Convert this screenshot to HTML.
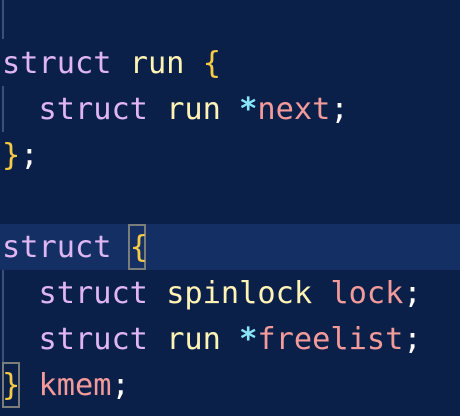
<!DOCTYPE html>
<html><head><style>
html,body{margin:0;padding:0;width:460px;height:416px;overflow:hidden;background:#0b2049;}
.ln{position:absolute;left:2px;height:46px;line-height:46px;font-family:"DejaVu Sans Mono","Liberation Mono",monospace;font-size:30.3px;white-space:pre;color:#fff;}
.k{color:#dfb6f2}.t{color:#fff3b5}.b{color:#f6cb45}.v{color:#f39a9a}.p{color:#88e6f5;font-weight:bold}
.hl{position:absolute;left:0;top:224px;width:460px;height:46px;background:#132f64;}
.g{position:absolute;left:2px;width:2px;background:#3d4f7a;}
.box{position:absolute;border:2px solid #7a7d7a;box-sizing:border-box;}
</style></head><body>
<div class="hl"></div>
<div class="g" style="top:0;height:39px"></div>
<div class="g" style="top:86px;height:46px"></div>
<div class="g" style="top:270px;height:92px"></div>
<div class="box" style="left:128px;top:224px;width:18px;height:46px"></div>
<div class="box" style="left:2px;top:362px;width:18px;height:46px"></div>
<div class="ln" style="top:41px"><span class="k">struct</span> <span class="t">run</span> <span class="b">{</span></div>
<div class="ln" style="top:87px">  <span class="k">struct</span> <span class="t">run</span> <span class="p">*</span><span class="v">next</span>;</div>
<div class="ln" style="top:133px"><span class="b">}</span>;</div>
<div class="ln" style="top:225px"><span class="k">struct</span> <span class="b">{</span></div>
<div class="ln" style="top:271px">  <span class="k">struct</span> <span class="t">spinlock</span> <span class="v">lock</span>;</div>
<div class="ln" style="top:317px">  <span class="k">struct</span> <span class="t">run</span> <span class="p">*</span><span class="v">freelist</span>;</div>
<div class="ln" style="top:363px"><span class="b">}</span> <span class="v">kmem</span>;</div>
</body></html>
